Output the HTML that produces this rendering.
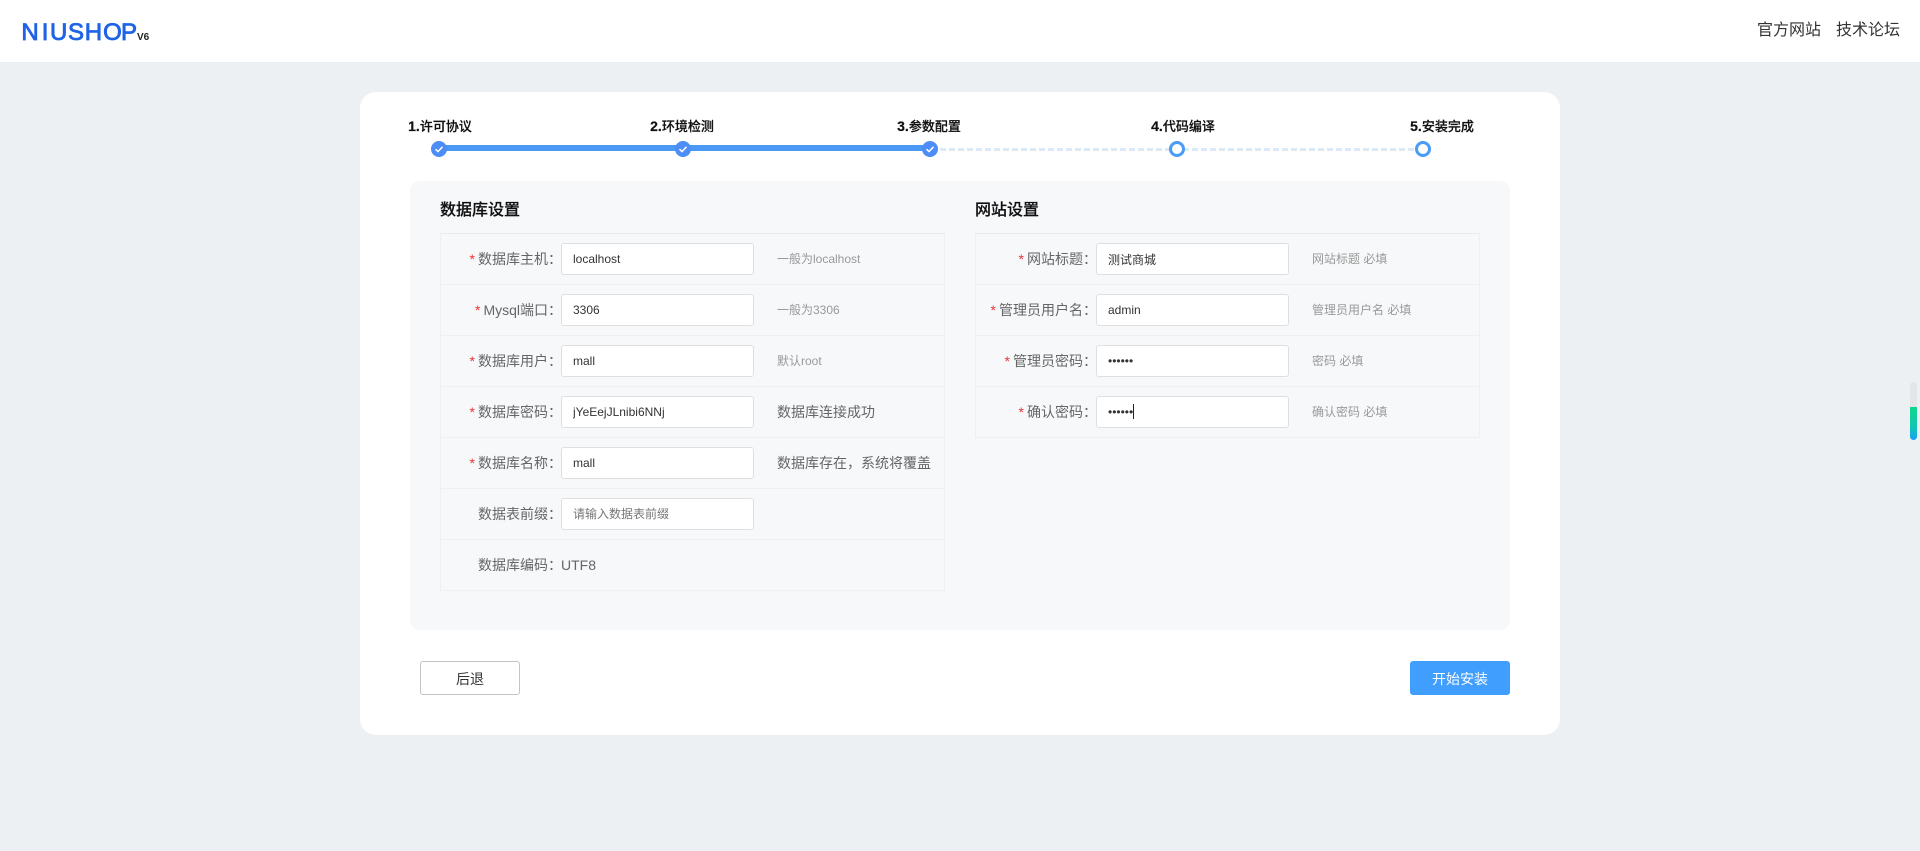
<!DOCTYPE html>
<html lang="zh-CN">
<head>
<meta charset="utf-8">
<title>NIUSHOP 安装</title>
<style>
*{box-sizing:border-box;margin:0;padding:0}
html,body{width:1920px;height:851px;overflow:hidden}
body{background:#edf0f3;font-family:"Liberation Sans","Noto Sans CJK SC",sans-serif;color:#666;position:relative}
.abs{position:absolute}
header{position:absolute;left:0;top:0;width:1920px;height:62px;background:#fff}
.nav{position:absolute;top:19px;font-size:16px;line-height:24px;color:#333;white-space:nowrap}
.card{position:absolute;left:360px;top:92px;width:1200px;height:643px;background:#fff;border-radius:16px}
.lbl{position:absolute;top:118px;width:100px;text-align:center;font-size:13px;line-height:16px;font-weight:500;color:#111;white-space:nowrap;-webkit-text-stroke:.2px #111}
.lbl b{font-size:14px;font-weight:bold}
.done{position:absolute;top:141px;width:16px;height:16px;border-radius:50%;background:#4d8df5}
.todo{position:absolute;top:141px;width:16px;height:16px;border-radius:50%;background:#fff;border:3px solid #4a9cf5}
.bar{position:absolute;top:145px;height:6px;background:#4a9af5}
.dash{position:absolute;top:148px;height:3px;background:repeating-linear-gradient(90deg,#dce9f6 0 6px,transparent 6px 9px)}
.panel{position:absolute;left:410px;top:181px;width:1100px;height:449px;background:#f7f8fa;border-radius:10px}
h3{position:absolute;top:200px;font-size:16px;line-height:22px;font-weight:500;color:#111;-webkit-text-stroke:.2px #111}
.tbl{position:absolute;top:233px;border:1px solid #eef0f2;border-top-color:#e9ebee}
.row{position:relative;height:51px;border-bottom:1px solid #eef0f2}
.row:last-child{border-bottom:0;height:50px}
.l{position:absolute;left:0;top:0;width:121px;text-align:right;font-size:14px;line-height:50px;color:#666;white-space:nowrap}
.l i{font-style:normal;color:#e33;font-size:14px;margin-right:3px}
input{position:absolute;left:120px;top:9px;width:193px;height:32px;border:1px solid #dedfe0;border-radius:3px;background:#fff;padding:0 11px;font:12px "Liberation Sans","Noto Sans CJK SC",sans-serif;color:#333;outline:0}
input::placeholder{color:#777;opacity:1}
.h{position:absolute;left:336px;top:0;font-size:12px;line-height:50px;color:#999;white-space:nowrap}
.m{position:absolute;left:336px;top:0;font-size:14px;line-height:50px;color:#666;white-space:nowrap}
.v{position:absolute;left:120px;top:0;font-size:14px;line-height:50px;color:#666}
.btn{position:absolute;top:661px;width:100px;height:34px;border-radius:3px;font-size:14px;line-height:36px;text-align:center}
.caret{position:absolute;left:1133px;top:404px;width:1px;height:15px;background:#222}
.track{position:absolute;left:1910px;top:382px;width:7px;height:58px;border-radius:4px;overflow:hidden;background:#e3e5e7}
.fill{position:absolute;left:0;top:25px;width:7px;height:33px;background:linear-gradient(180deg,#0fd88a 0%,#10c6b0 60%,#1a9ff8 100%)}
</style>
</head>
<body>
<header>
<svg class="abs" style="left:20px;top:20px" width="135" height="24" viewBox="0 0 135 24">
<text transform="scale(1.2,1.18)" x="1.2 18.1 25 40 54 69.3 84.2" y="16.9" font-family="Liberation Sans" font-size="20" fill="#1f63e6" stroke="#1f63e6" stroke-width=".7">NIUSHOP</text>
<text x="117" y="20" font-family="Liberation Sans" font-weight="bold" font-size="10" fill="#222">V6</text>
</svg>
<div class="nav" style="left:1757px">官方网站</div>
<div class="nav" style="left:1836px">技术论坛</div>
</header>

<div class="card"></div>

<div class="lbl" style="left:390px"><b>1.</b>许可协议</div>
<div class="lbl" style="left:632px"><b>2.</b>环境检测</div>
<div class="lbl" style="left:879px"><b>3.</b>参数配置</div>
<div class="lbl" style="left:1133px"><b>4.</b>代码编译</div>
<div class="lbl" style="left:1392px"><b>5.</b>安装完成</div>

<div class="bar" style="left:438px;width:492px"></div>
<div class="dash" style="left:940px;width:480px"></div>

<div class="done" style="left:431px"><svg width="16" height="16" viewBox="0 0 16 16"><path d="M4.5 8.2 7 10.6 11.5 5.8" fill="none" stroke="#fff" stroke-width="1.5"/></svg></div>
<div class="done" style="left:675px"><svg width="16" height="16" viewBox="0 0 16 16"><path d="M4.5 8.2 7 10.6 11.5 5.8" fill="none" stroke="#fff" stroke-width="1.5"/></svg></div>
<div class="done" style="left:922px"><svg width="16" height="16" viewBox="0 0 16 16"><path d="M4.5 8.2 7 10.6 11.5 5.8" fill="none" stroke="#fff" stroke-width="1.5"/></svg></div>
<div class="todo" style="left:1169px"></div>
<div class="todo" style="left:1415px"></div>

<div class="panel"></div>

<h3 style="left:440px">数据库设置</h3>
<div class="tbl" style="left:440px;width:505px">
  <div class="row"><div class="l"><i>*</i>数据库主机：</div><input value="localhost"><div class="h">一般为localhost</div></div>
  <div class="row"><div class="l"><i>*</i>Mysql端口：</div><input value="3306"><div class="h">一般为3306</div></div>
  <div class="row"><div class="l"><i>*</i>数据库用户：</div><input value="mall"><div class="h">默认root</div></div>
  <div class="row"><div class="l"><i>*</i>数据库密码：</div><input value="jYeEejJLnibi6NNj"><div class="m">数据库连接成功</div></div>
  <div class="row"><div class="l"><i>*</i>数据库名称：</div><input value="mall"><div class="m">数据库存在，系统将覆盖</div></div>
  <div class="row"><div class="l">数据表前缀：</div><input placeholder="请输入数据表前缀"></div>
  <div class="row"><div class="l">数据库编码：</div><div class="v">UTF8</div></div>
</div>

<h3 style="left:975px">网站设置</h3>
<div class="tbl" style="left:975px;width:505px">
  <div class="row"><div class="l"><i>*</i>网站标题：</div><input value="测试商城"><div class="h">网站标题 必填</div></div>
  <div class="row"><div class="l"><i>*</i>管理员用户名：</div><input value="admin"><div class="h">管理员用户名 必填</div></div>
  <div class="row"><div class="l"><i>*</i>管理员密码：</div><input type="password" value="123456"><div class="h">密码 必填</div></div>
  <div class="row"><div class="l"><i>*</i>确认密码：</div><input type="password" value="123456"><div class="h">确认密码 必填</div></div>
</div>
<div class="caret"></div>

<div class="btn" style="left:420px;background:#fff;border:1px solid #c4c4c4;color:#333;line-height:34px">后退</div>
<div class="btn" style="left:1410px;background:#409eff;color:#fff">开始安装</div>

<div class="track"><div class="fill"></div></div>
</body>
</html>
